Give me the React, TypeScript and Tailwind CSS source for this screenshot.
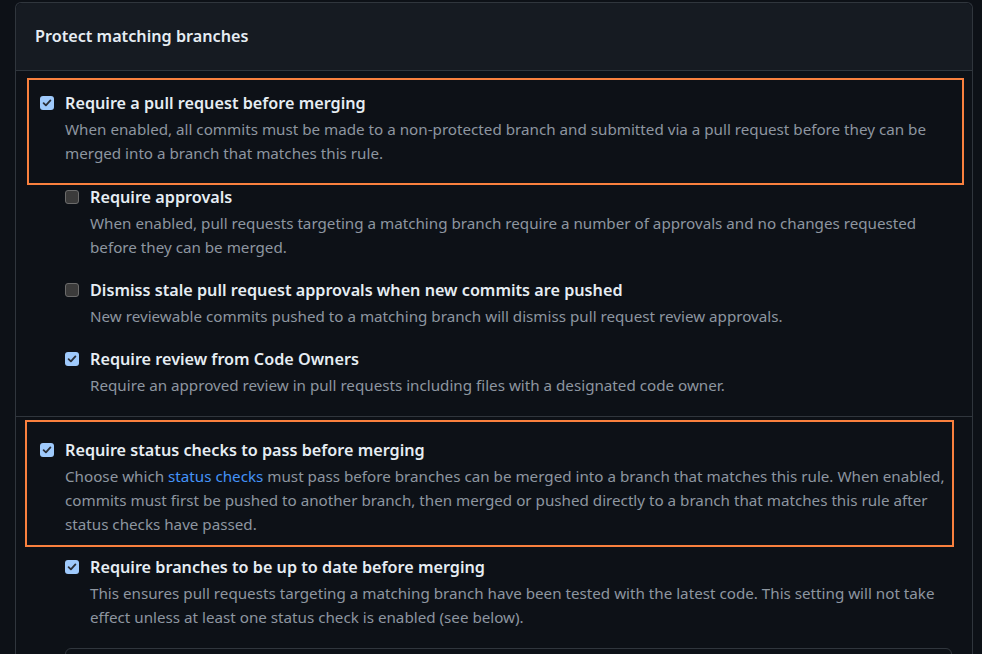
import React from "react";

function Check({ on }: { on: boolean }) {
  if (on) {
    return (
      <span className="mt-[5px] flex h-[14px] w-[14px] shrink-0 items-center justify-center rounded-[3px] bg-[#9fcafc]">
        <svg width="10" height="10" viewBox="0 0 10 10" fill="none">
          <path d="M1.6 5.2 L3.9 7.4 L8.4 2.4" stroke="#2a2f38" strokeWidth="1.8" strokeLinecap="round" strokeLinejoin="round" />
        </svg>
      </span>
    );
  }
  return <span className="mt-[5px] h-[14px] w-[14px] shrink-0 rounded-[3px] border border-[#6b6b6b] bg-[#3b3b3b]" />;
}

function Rule({
  on,
  title,
  lines,
  className = "",
}: {
  on: boolean;
  title: string;
  lines: React.ReactNode[];
  className?: string;
}) {
  return (
    <div className={"flex gap-[11px] " + className}>
      <Check on={on} />
      <div>
        <div className="whitespace-nowrap text-[16.2px] font-semibold leading-[24px] text-[#e6edf3]">{title}</div>
        <div className="mt-[2px] text-[15.2px] leading-[24px] text-[#8d96a0]">
          {lines.map((l, i) => (
            <div key={i} className="whitespace-nowrap">
              {l}
            </div>
          ))}
        </div>
      </div>
    </div>
  );
}

export default function App() {
  return (
    <div
      className="h-[654px] overflow-hidden bg-[#0d1117] pl-[15px] pr-[9px] pt-[2px]"
      style={{ fontFamily: '"Noto Sans", "Open Sans", sans-serif' }}
    >
      <div className="rounded-t-md border border-b-0 border-[#30363d]">
        {/* Header */}
        <div className="flex h-[68px] items-center rounded-t-md border-b border-[#30363d] bg-[#161b22] px-[19px]">
          <h2 className="text-[16.2px] font-semibold text-[#e6edf3]">Protect matching branches</h2>
        </div>

        {/* Pull request section */}
        <div className="border-b border-[#30363d] pb-[19px]">
          <div className="ml-[11px] mr-[8px] mt-[7px] border-2 border-[#f9803e] pb-[18px] pl-[11px] pt-[11px]">
            <Rule
              on
              title="Require a pull request before merging"
              lines={[
                "When enabled, all commits must be made to a non-protected branch and submitted via a pull request before they can be",
                "merged into a branch that matches this rule.",
              ]}
            />
          </div>
          <div className="ml-[49px] mr-[40px] flex flex-col gap-[19px]">
            <Rule
              on={false}
              title="Require approvals"
              lines={[
                "When enabled, pull requests targeting a matching branch require a number of approvals and no changes requested",
                "before they can be merged.",
              ]}
            />
            <Rule
              on={false}
              title="Dismiss stale pull request approvals when new commits are pushed"
              lines={["New reviewable commits pushed to a matching branch will dismiss pull request review approvals."]}
            />
            <Rule
              on
              title="Require review from Code Owners"
              lines={["Require an approved review in pull requests including files with a designated code owner."]}
            />
          </div>
        </div>

        {/* Status checks section */}
        <div className="ml-[9px] mr-[18px] mt-[3px] border-2 border-[#f9803e] pb-[9px] pl-[13px] pt-[16px]">
          <Rule
            on
            title="Require status checks to pass before merging"
            lines={[
              <>
                Choose which <span className="text-[#4493f8]">status checks</span> must pass before branches can be merged into a
                branch that matches this rule. When enabled,
              </>,
              "commits must first be pushed to another branch, then merged or pushed directly to a branch that matches this rule after",
              "status checks have passed.",
            ]}
          />
        </div>
        <div className="ml-[49px] mr-[20px] mt-[8px]">
          <Rule
            on
            title="Require branches to be up to date before merging"
            lines={[
              "This ensures pull requests targeting a matching branch have been tested with the latest code. This setting will not take",
              "effect unless at least one status check is enabled (see below).",
            ]}
          />
          <div className="mt-[19px] h-[40px] rounded-md border border-[#30363d]" />
        </div>
      </div>
    </div>
  );
}
